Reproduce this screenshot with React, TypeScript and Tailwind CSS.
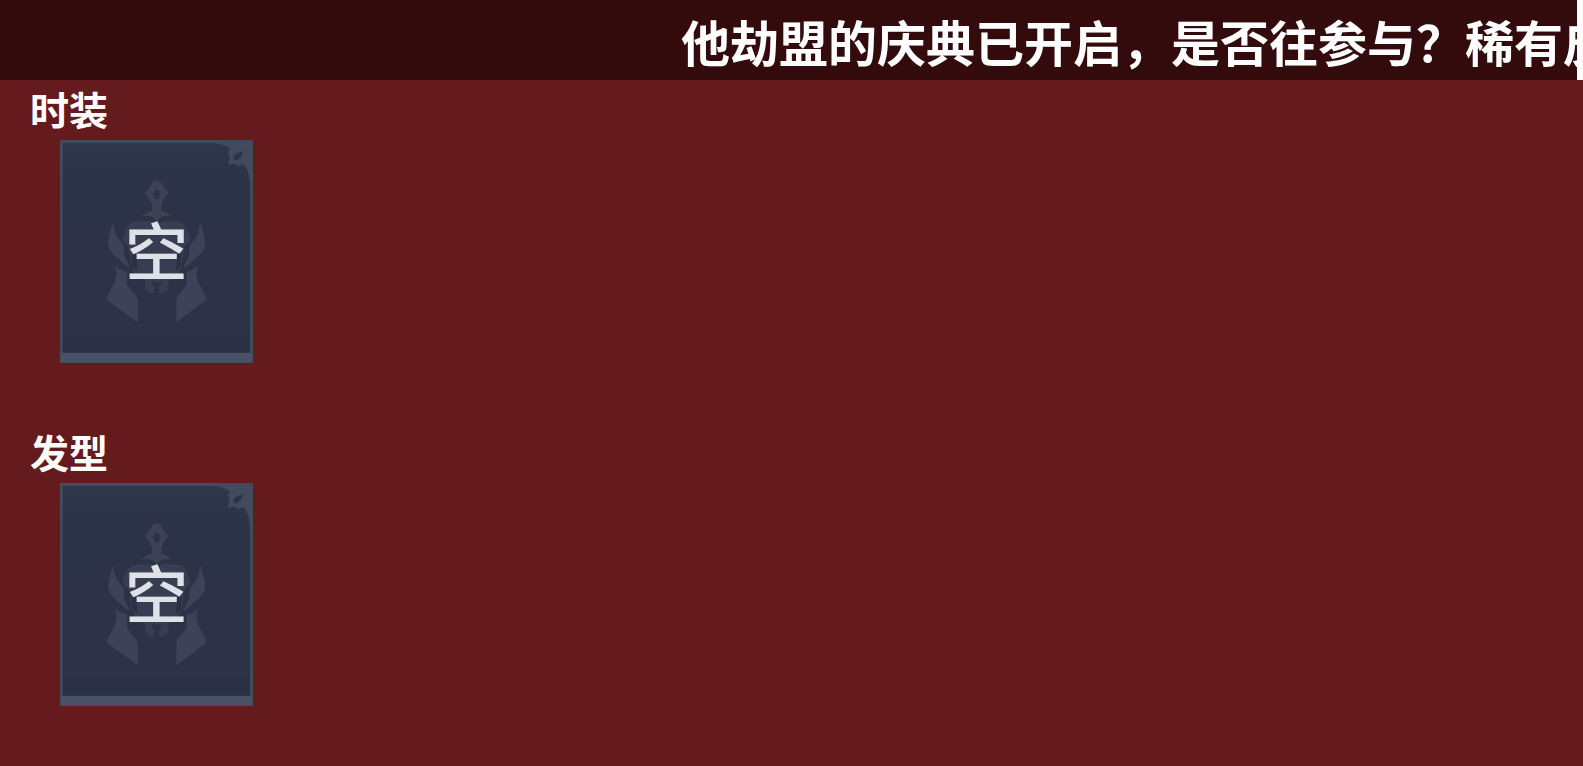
type SlotProps = { id: string; title: string };

const announcement = "他劫盟的庆典已开启，是否往参与？稀有皮肤";

function SlotArt() {
  return (
    <svg viewBox="30 30 579 669" className="block h-full w-full" aria-hidden="true">
      <defs>
        <linearGradient id="slot-bg" x1="0" y1="0" x2="0" y2="1">
          <stop offset="0" stopColor="#2e364a" />
          <stop offset="0.3" stopColor="#2d3346" />
          <stop offset="0.9" stopColor="#2d3246" />
          <stop offset="1" stopColor="#292f44" />
        </linearGradient>
      </defs>
      <rect x="30" y="30" width="579" height="669" fill="#434a5e" />
      <path
        d="M38 39H490C508 40 522 46 535 51L540 58L534 66L539 84L534 104L552 101L566 107L580 103C592 115 600 135 600 165V668H38Z"
        fill="url(#slot-bg)"
      />
      <path d="M551 77L562 70L580 62L574 79L566 88L556 92L550 86Z" fill="#2d3448" />
      <path d="M32 669H607V697H32Z" fill="#4a5166" />
      <g fill="#3d4256">
        <path
          fillRule="evenodd"
          d="M309 155Q320 149 331 155L338 168L355 190L341 208L334 225V244Q350 244 362 260Q342 255 333 261L320 273L307 261Q296 255 276 260Q290 244 306 244V225L299 208L285 190L302 168ZM320 176L308 190L312 205L320 210L328 205L332 190Z"
        />
        <path d="M190 277Q192 310 205 326L221 346L222 375L242 416Q221 402 204 386Q178 368 174 340Q176 312 190 277Z" />
        <path d="M450 277Q448 310 435 326L419 346L418 375L398 416Q419 402 436 386Q462 368 466 340Q464 312 450 277Z" />
        <path d="M193 404Q203 418 232 425L231 466L263 505V577L168 508L195 455Q204 432 193 404Z" />
        <path d="M445 404Q435 418 410 425L409 466L379 505V577L471 508L444 455Q435 432 445 404Z" />
        <path
          opacity="0.75"
          d="M246 276L300 273L320 284L340 273L393 276Q414 292 421 330L403 352L396 402L384 438L355 452V478Q345 492 327 490V474L320 467L312 474V490Q294 490 286 478V452L256 438L244 402L237 352L218 330Q226 292 246 276Z"
        />
      </g>
      <path d="M246 350L258 372L262 424L246 405ZM393 350L382 372L378 424L393 405Z" fill="#2b3045" />
      <path d="M304 455H336L330 470H310Z" fill="#2d3347" />
    </svg>
  );
}

function Slot({ id, title }: SlotProps) {
  return (
    <section aria-labelledby={id} className="h-[343px] px-[30px]">
      <h2 id={id} className="h-[60px] text-[39px] leading-[56px] font-bold">
        {title}
      </h2>
      <button type="button" className="relative ml-[30px] block h-[223px] w-[193px] cursor-pointer">
        <SlotArt />
        <span className="absolute inset-0 flex items-center justify-center pb-2 text-[63px] leading-none font-medium text-[#dfe1e9]">
          空
        </span>
      </button>
    </section>
  );
}

export default function App() {
  return (
    <div className="min-h-screen overflow-x-hidden bg-[#651a1e] font-['Noto_Sans_CJK_SC',sans-serif] text-white">
      <header className="flex h-20 bg-white">
        <div className="mr-1.5 min-w-0 flex-1 overflow-hidden bg-[#330b0d]">
          <p className="ml-[681px] text-[49px] leading-[82px] font-bold whitespace-nowrap">{announcement}</p>
        </div>
      </header>
      <main>
        <Slot id="outfit" title="时装" />
        <Slot id="hair" title="发型" />
      </main>
    </div>
  );
}
